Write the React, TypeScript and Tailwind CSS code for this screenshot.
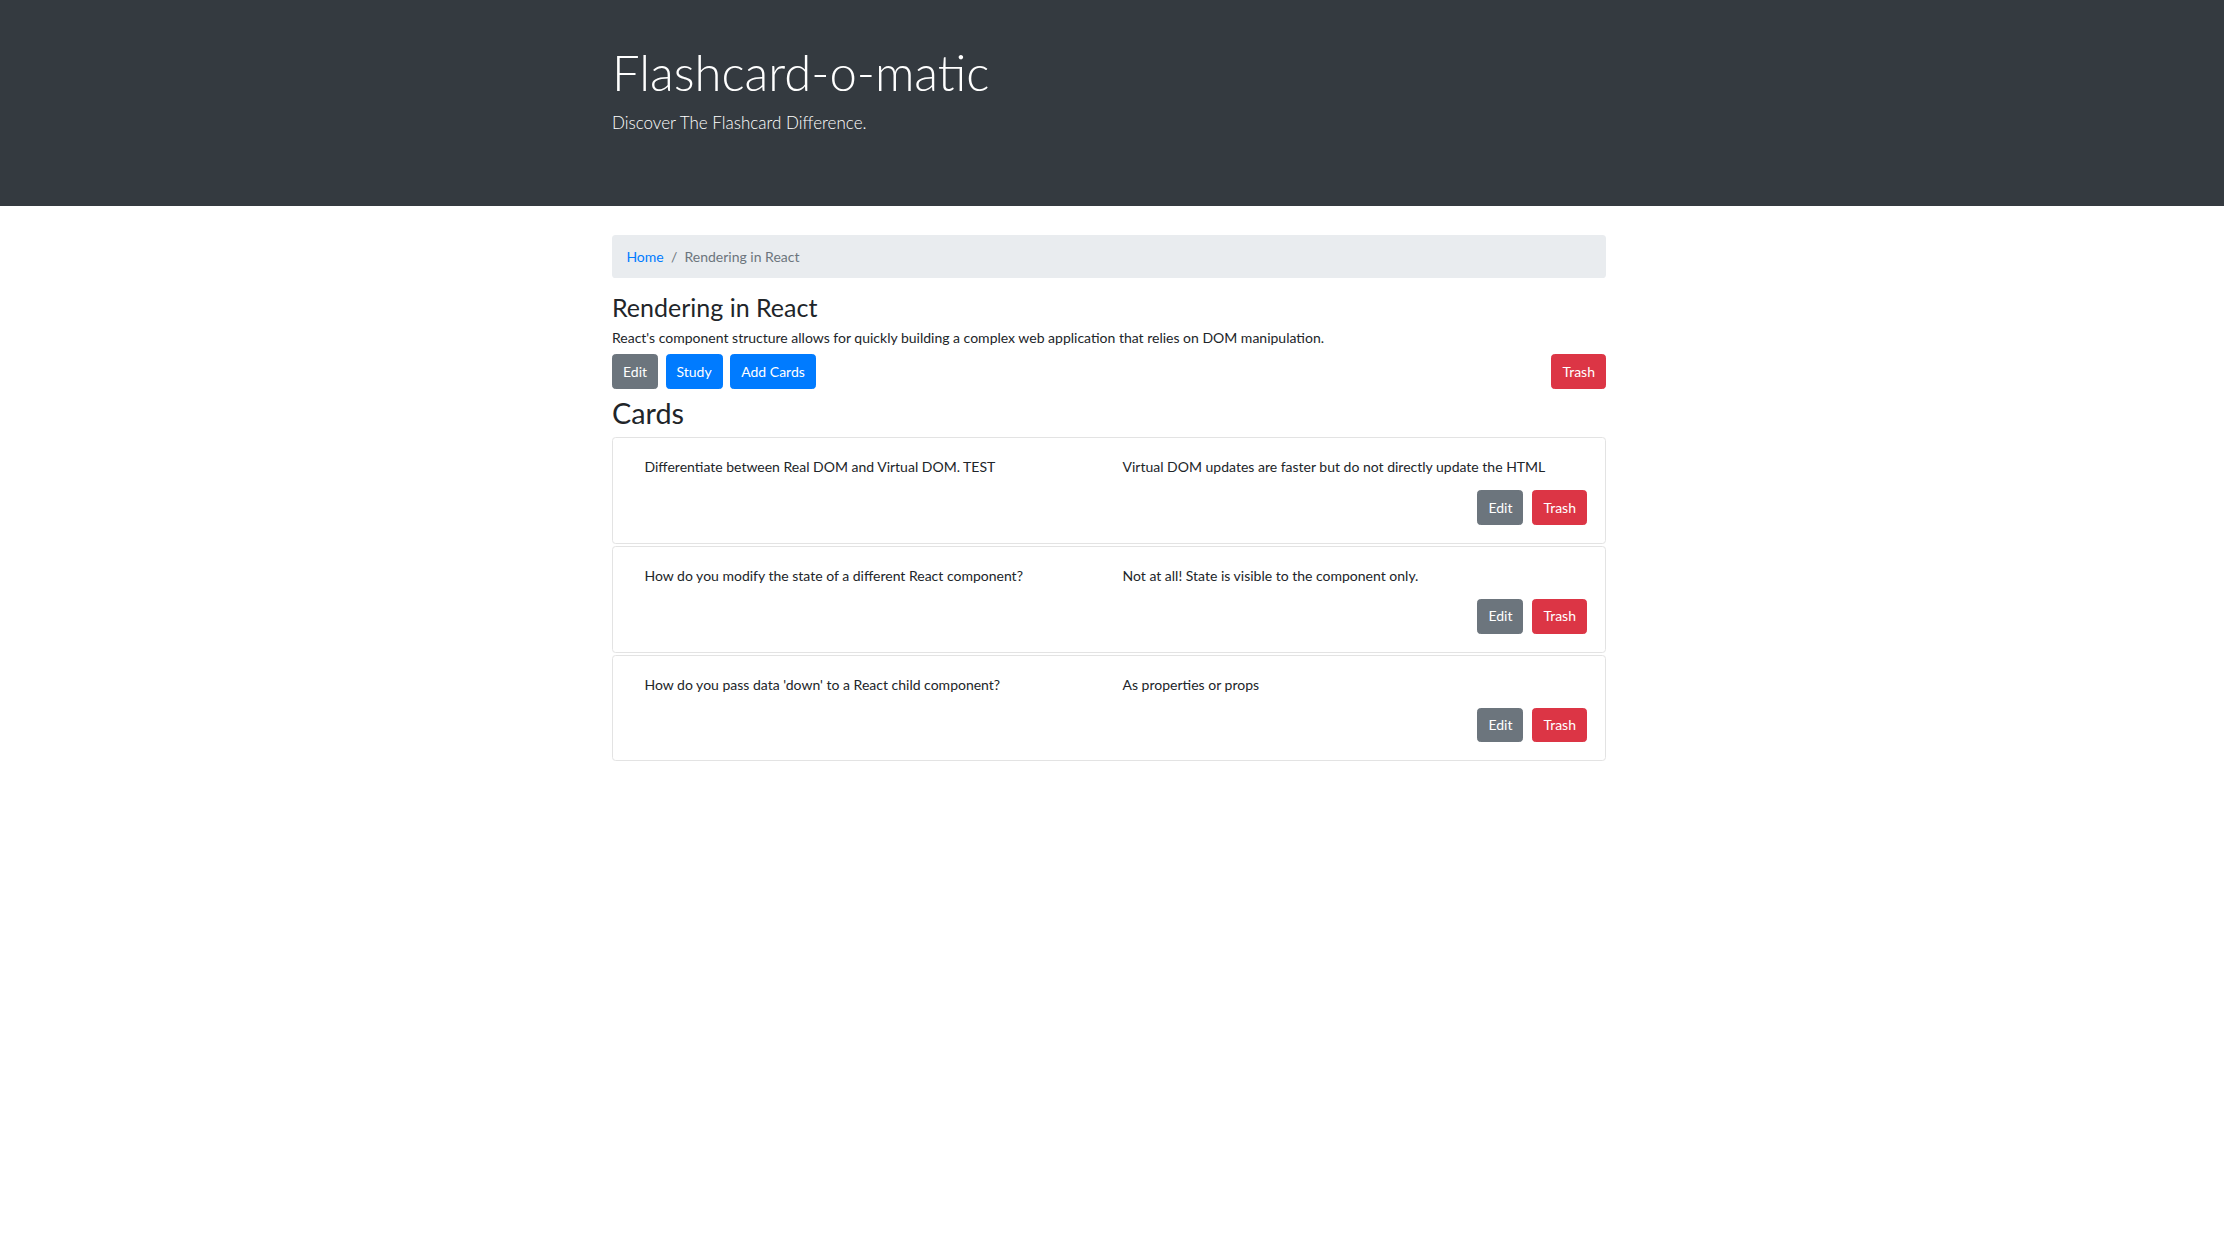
import React from "react";

const cards = [
  {
    front: "Differentiate between Real DOM and Virtual DOM. TEST",
    back: "Virtual DOM updates are faster but do not directly update the HTML",
  },
  {
    front: "How do you modify the state of a different React component?",
    back: "Not at all! State is visible to the component only.",
  },
  {
    front: "How do you pass data 'down' to a React child component?",
    back: "As properties or props",
  },
];

function Btn({ color, children }: { color: "gray" | "blue" | "red"; children: React.ReactNode }) {
  const bg =
    color === "gray" ? "bg-[#6c757d] border-[#6c757d]" : color === "blue" ? "bg-[#007bff] border-[#007bff]" : "bg-[#dc3545] border-[#dc3545]";
  return (
    <button className={`${bg} border text-white text-[14px] leading-[21.6px] px-[10px] py-[5.6px] rounded-[3.6px]`}>
      {children}
    </button>
  );
}

export default function App() {
  return (
    <div className="min-h-screen bg-white text-[#212529] font-['Lato',sans-serif]">
      {/* Header */}
      <div className="bg-[#343a40] h-[206px] text-white">
        <div className="ml-[612px] w-[994px] pt-[40px]">
          <h1 className="text-[49px] font-light leading-[64px]">Flashcard-o-matic</h1>
          <p className="text-[17px] font-light leading-[27px] mt-[4.5px]">Discover The Flashcard Difference.</p>
        </div>
      </div>

      <div className="ml-[612px] w-[994px] pt-[29px]">
        {/* Breadcrumb */}
        <nav className="bg-[#e9ecef] rounded-[3.6px] h-[43px] px-[14.4px] flex items-center text-[14px]">
          <a className="text-[#007bff]" href="#">Home</a>
          <span className="text-[#6c757d] px-[7.2px]">/</span>
          <span className="text-[#6c757d]">Rendering in React</span>
        </nav>

        {/* Deck */}
        <h3 className="text-[25px] leading-[30px] mt-[14.4px]">Rendering in React</h3>
        <p className="text-[14px] leading-[21.6px] mt-[5px]">
          React's component structure allows for quickly building a complex web application that relies on DOM manipulation.
        </p>
        <div className="flex justify-between mt-[5.5px]">
          <div className="flex gap-[7.5px]">
            <Btn color="gray">Edit</Btn>
            <Btn color="blue">Study</Btn>
            <Btn color="blue">Add Cards</Btn>
          </div>
          <Btn color="red">Trash</Btn>
        </div>

        <h2 className="text-[28.8px] leading-[34.6px] mt-[7px] mb-[6px]">Cards</h2>

        {/* Card list */}
        <div className="flex flex-col gap-[2px]">
          {cards.map((c) => (
            <div key={c.front} className="border border-[#e3e3e3] rounded-[3.6px] p-[18px]">
              <div className="grid grid-cols-2 text-[14px] leading-[21.6px]">
                <p className="px-[13.5px]">{c.front}</p>
                <p className="px-[13.5px]">{c.back}</p>
              </div>
              <div className="flex justify-end gap-[9px] mt-[12.5px]">
                <Btn color="gray">Edit</Btn>
                <Btn color="red">Trash</Btn>
              </div>
            </div>
          ))}
        </div>
      </div>
    </div>
  );
}
